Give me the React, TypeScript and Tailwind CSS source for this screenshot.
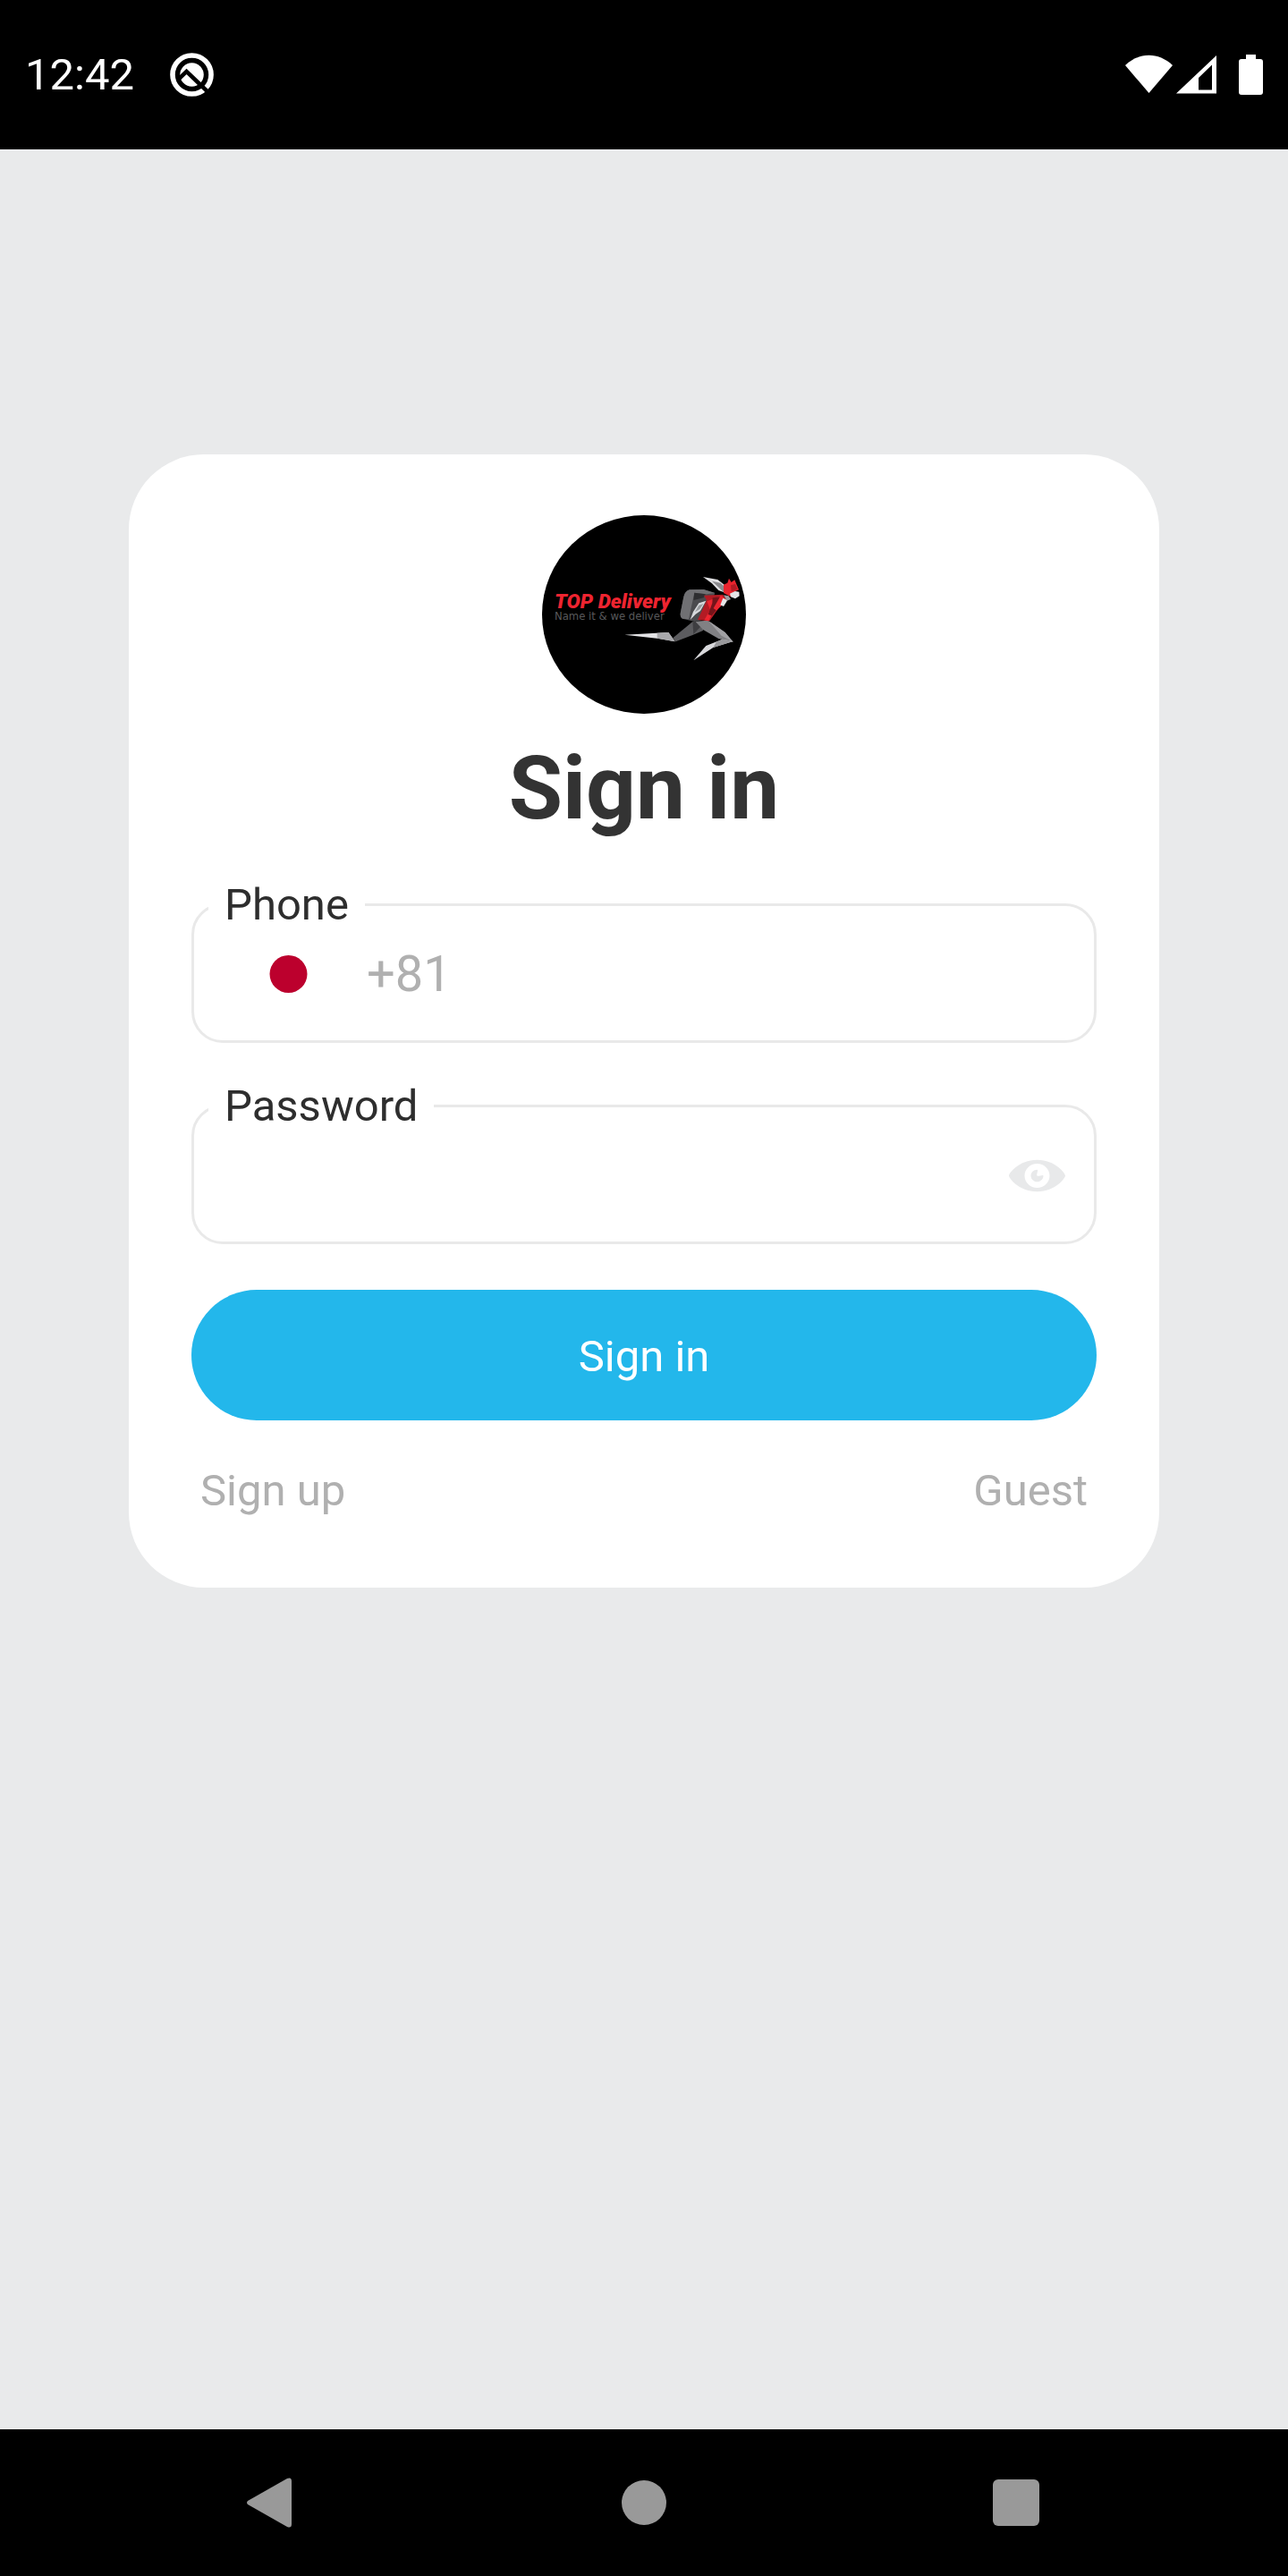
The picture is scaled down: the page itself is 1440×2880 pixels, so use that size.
import React, { useState } from 'react';

const AssistantIcon = () => (
  <svg className="w-[49px] h-[49px]" viewBox="572 58 148 148" aria-hidden="true">
    <circle cx="646" cy="132" r="65" fill="none" stroke="#fff" strokeWidth="17" />
    <circle cx="646" cy="132" r="40" fill="#fff" />
    <path d="M600 148L628 121L704 194" fill="none" stroke="#000" strokeWidth="14" />
  </svg>
);

const StatusIcons = () => (
  <svg className="w-[154px] h-[45px]" viewBox="0 0 154 45" fill="#fff" aria-hidden="true">
    {/* wifi */}
    <path d="M0 12C16 -3 37 -3 53 12L26.500 43Z" />
    {/* signal */}
    <path fillRule="evenodd" d="M57 43.500L102 1V43.500ZM82 26V39.500H97V11.500Z" />
    {/* battery */}
    <path d="M135 0H146V5H151Q154 5 154 8V42Q154 45 151 45H130Q127 45 127 42V8Q127 5 130 5H135Z" />
  </svg>
);

const Logo = () => (
  <svg className="w-[228px] h-[222px]" viewBox="48 48 684 666" role="img" aria-label="TOP Delivery">
    <ellipse cx="390" cy="381" rx="342" ry="333" fill="#000" />
    <text x="90" y="360" fontSize="68" fontWeight="900" fontStyle="italic" fill="#ee2430" fontFamily="Roboto, sans-serif">TOP Delivery</text>
    <text x="90" y="399" fontSize="35" fill="#58585a" fontFamily="'DejaVu Sans', sans-serif">Name it &amp; we deliver</text>
    {/* back leg */}
    <path d="M325 449L472 441L494 472L440 462Z" fill="#e4e4e6" />
    <path d="M434 443L472 441L494 472L434 461Z" fill="#a9a9ac" />
    <path d="M487 460L553 405L590 411L588 435L553 450L496 472Z" fill="#5c5c5f" />
    <path d="M553 405L590 411L556 447Z" fill="#3e3e41" />
    {/* front leg */}
    <path d="M562 404L604 401L662 441L689 473L640 462L588 432Z" fill="#818184" />
    <path d="M606 402L662 441L689 473L650 452Z" fill="#a1a1a4" />
    <path d="M689 471L622 492L556 535L598 486L653 464Z" fill="#d9d9dc" />
    <path d="M632 474L653 464L689 471L622 492Z" fill="#98989b" />
    {/* backpack */}
    <path d="M543 298L590 297L628 309L620 332L582 400L560 405L519 395Q509 391 513 372L523 322Q527 302 543 298Z" fill="#4b4b4e" />
    <path d="M543 298L590 297L628 309L600 313L559 308L540 397L519 395Q509 391 513 372L523 322Q527 302 543 298Z" fill="#707073" />
    <path d="M559 308L596 313L590 325L556 333Z" fill="#2e2e30" />
    {/* body */}
    <path d="M591 317L655 314L668 333L640 360L610 403L570 399L584 369L600 333Z" fill="#b31b24" />
    <path d="M601 337L650 318L667 334L635 366L620 374L607 403L592 400L612 365Z" fill="#ed2630" />
    <path d="M620 325L645 322L623 360L632 367L617 385L605 381L619 343Z" fill="#74141a" />
    <path d="M598 335L574 343L555 372L545 399L563 380L579 369Z" fill="#d8dadd" />
    <path d="M589 345L574 350L561 373L577 363Z" fill="#96999c" />
    <path d="M655 326L670 333L657 354L646 349Z" fill="#e5e5e7" />
    {/* arm */}
    <path d="M588 255L637 264L660 282L657 306L640 300L618 277Z" fill="#e0e0e2" />
    <path d="M618 269L646 275L660 287L657 306Z" fill="#8a8a8d" />
    {/* head */}
    <path d="M657 281L670 275L675 260L683 273L694 265L699 277L708 298L688 307L680 321L657 309Z" fill="#e9242e" />
    <path d="M681 283L696 279L704 297L683 304Z" fill="#b31b24" />
    <path d="M678 311L695 303L709 305L710 319L696 328L681 322Z" fill="#e5e5e7" />
    <path d="M657 316L674 319L681 330L668 335Z" fill="#9c9ca0" />
  </svg>
);

const EyeIcon = () => (
  <svg className="w-[63px] h-[63px]" viewBox="0 0 20 20" fill="#e8e9ea" aria-hidden="true">
    <path d="M10 4.400C3.439 4.400 0 9.232 0 10c0 .766 3.439 5.600 10 5.600 6.560 0 10-4.834 10-5.600 0-.768-3.440-5.600-10-5.600zm0 9.907c-2.455 0-4.445-1.928-4.445-4.307S7.545 5.691 10 5.691 14.444 7.621 14.444 10 12.455 14.307 10 14.307zM10 10c-.407-.447.663-2.154 0-2.154-1.228 0-2.223.965-2.223 2.154s.995 2.154 2.223 2.154c1.227 0 2.223-.965 2.223-2.154 0-.547-1.877.379-2.223 0z" />
  </svg>
);

const Field = ({ id, label, children }: { id: string; label: string; children: React.ReactNode }) => (
  <div className="relative flex items-center h-[156px] pt-0.5 border-3 border-[#e9e9e9] rounded-[35px]">
    <label htmlFor={id} className="absolute -top-[29px] left-4 px-[18px] bg-white text-[49px] leading-[56px] text-[#2e2e2e]">
      {label}
    </label>
    {children}
  </div>
);

const App = () => {
  const [showPassword, setShowPassword] = useState(false);

  return (
    <div className="min-h-screen flex flex-col bg-[#e9eaeb] font-['Roboto',sans-serif]">
      <header className="flex items-center justify-between h-[167px] px-7 bg-black">
        <div className="flex items-center gap-10">
          <span className="text-[49px] leading-[56px] text-white">12:42</span>
          <AssistantIcon />
        </div>
        <StatusIcons />
      </header>

      <main className="flex-1 pt-[341px]">
        <form
          className="w-4/5 mx-auto px-[70px] pt-[68px] pb-20 flex flex-col bg-white rounded-[84px]"
          onSubmit={(e) => e.preventDefault()}
        >
          <div className="flex justify-center">
            <Logo />
          </div>
          <h1 className="mt-7 text-center text-[98px] leading-[112px] font-bold text-[#333333]">Sign in</h1>

          <div className="mt-[72px] flex flex-col gap-[69px]">
            <Field id="phone" label="Phone">
              <button type="button" aria-label="Country: Japan" className="ml-[53px]">
                <svg className="w-[105px] h-[70px]" viewBox="0 0 105 70" aria-hidden="true">
                  <rect width="105" height="70" fill="#fff" />
                  <circle cx="52.500" cy="35" r="21" fill="#bc002d" />
                </svg>
              </button>
              <input
                id="phone"
                type="tel"
                defaultValue="+81"
                className="flex-1 min-w-0 mx-[35px] text-[56px] leading-[64px] text-[#b0b0b0] outline-none"
              />
            </Field>
            <Field id="password" label="Password">
              <input
                id="password"
                type={showPassword ? 'text' : 'password'}
                className="flex-1 min-w-0 mx-[35px] text-[56px] leading-[64px] text-[#333333] outline-none"
              />
              <button
                type="button"
                aria-label="Show password"
                className="mr-8"
                onClick={() => setShowPassword(!showPassword)}
              >
                <EyeIcon />
              </button>
            </Field>
          </div>

          <button type="submit" className="mt-[51px] h-[146px] pt-1 rounded-full bg-[#23b7eb] text-[49px] leading-[56px] text-white">
            Sign in
          </button>
          <div className="mt-[51px] px-[10px] flex justify-between text-[49px] leading-[56px] text-[#b0b0b0]">
            <a href="#signup">Sign up</a>
            <a href="#guest">Guest</a>
          </div>
        </form>
      </main>

      <nav className="flex items-center justify-between h-[164px] px-69 bg-black">
        <button type="button" aria-label="Back" className="w-14 flex justify-start">
          <svg className="w-[50px] h-14" viewBox="0 0 50 56" fill="#999" aria-hidden="true">
            <path d="M1 26L45 1Q50 -1 50 4V52Q50 57 45 55L1 30Q-1 28 1 26Z" />
          </svg>
        </button>
        <button type="button" aria-label="Home" className="w-14 flex justify-center">
          <span className="w-[50px] h-[50px] rounded-full bg-[#999999]" />
        </button>
        <button type="button" aria-label="Recent apps" className="w-14 flex justify-center">
          <span className="w-[52px] h-[52px] rounded-md bg-[#999999]" />
        </button>
      </nav>
    </div>
  );
};

export default App;
